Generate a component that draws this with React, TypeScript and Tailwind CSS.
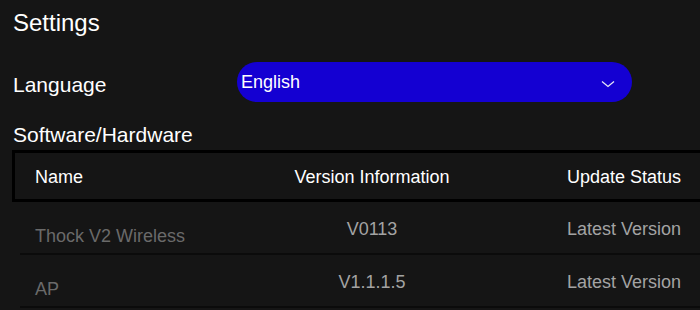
const rows = [
  { name: 'Thock V2 Wireless', version: 'V0113', status: 'Latest Version' },
  { name: 'AP', version: 'V1.1.1.5', status: 'Latest Version' },
]

export default function App() {
  return (
    <div className="w-[700px] h-[310px] overflow-hidden bg-[#151515] text-white font-['Liberation_Sans',Arial,sans-serif]">
      <div className="pl-[13px] pt-[9px] text-[24px] leading-[28px]">Settings</div>

      <div className="mt-[25px] flex items-center pl-[13px]">
        <div className="w-[224px] text-[21px] leading-[24px] pt-[6px]">Language</div>
        <div className="flex h-[40px] w-[395px] items-center justify-between rounded-full bg-[#1400d2] pl-[4px] pr-[17px]">
          <span className="text-[18px] leading-[20px]">English</span>
          <svg width="14" height="8" viewBox="0 0 14 8" fill="none" className="mt-[3px]">
            <path d="M1 1.5 L7 6.5 L13 1.5" stroke="#e6e6f5" strokeWidth="1.3" />
          </svg>
        </div>
      </div>

      <div className="mt-[21px] pl-[13px] text-[21px] leading-[24px]">Software/Hardware</div>

      <div className="ml-[12px] mt-[3px] w-[760px]">
        <div className="flex h-[52px] items-center border-[3px] border-black text-[18px]">
          <div className="w-[240px] pl-[20px] pt-[2px]">Name</div>
          <div className="w-[234px] pt-[2px] text-center">Version Information</div>
          <div className="w-[270px] pt-[2px] text-center">Update Status</div>
        </div>
        {rows.map((r) => (
          <div key={r.name} className="ml-[8px] flex h-[53px] border-b-2 border-[#0b0b0b] text-[18px] leading-[20px]">
            <div className="w-[235px] pl-[15px] pt-[24px] text-[#6a6a6a]">{r.name}</div>
            <div className="w-[234px] pt-[17px] text-center text-[#a3a3a3]">{r.version}</div>
            <div className="w-[270px] pt-[17px] text-center text-[#a3a3a3]">{r.status}</div>
          </div>
        ))}
      </div>
    </div>
  )
}
